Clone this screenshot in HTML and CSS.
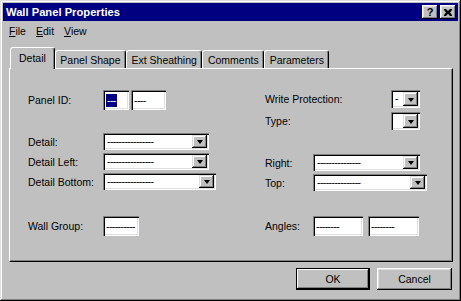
FILE: index.html
```html
<!DOCTYPE html>
<html lang="en">
<head>
	<meta charset="UTF-8">
	<title>Wall Panel Properties</title>
	<link rel="stylesheet" href="styles.css">
</head>
<body>
	<div class="window">
		<div class="titlebar">
			<span class="title">Wall Panel Properties</span>
			<div class="title-btns">
				<span class="tbtn help">?</span>
				<span class="tbtn">
					<svg width="8" height="7" viewBox="0 0 8 7"><path d="M0 0h2l2 2 2-2h2v1L6 3.5 8 6v1H6L4 5 2 7H0V6l2-2.5L0 1z" fill="#000"/></svg>
				</span>
			</div>
		</div>

		<div class="menubar">
			<span><u>F</u>ile</span>
			<span><u>E</u>dit</span>
			<span><u>V</u>iew</span>
		</div>

		<div class="tabs">
			<div class="tab active">Detail</div>
			<div class="tab">Panel Shape</div>
			<div class="tab">Ext Sheathing</div>
			<div class="tab">Comments</div>
			<div class="tab">Parameters</div>
		</div>

		<div class="panel">
			<div class="col col-left">
				<div class="row r-id">
					<span class="label">Panel ID:</span>
					<span class="field w-id1"><span class="sel">---</span></span>
					<span class="field w-id2">----</span>
				</div>
				<div class="row r-detail">
					<span class="label">Detail:</span>
					<span class="combo w-106"><span class="value">----------------</span><span class="arrow"></span></span>
				</div>
				<div class="row r-next">
					<span class="label">Detail Left:</span>
					<span class="combo w-106"><span class="value">----------------</span><span class="arrow"></span></span>
				</div>
				<div class="row r-next">
					<span class="label">Detail Bottom:</span>
					<span class="combo w-113"><span class="value">----------------</span><span class="arrow"></span></span>
				</div>
				<div class="row r-group">
					<span class="label">Wall Group:</span>
					<span class="field w-group">----------</span>
				</div>
			</div>

			<div class="col col-right">
				<div class="row r-wp">
					<span class="label wide">Write Protection:</span>
					<span class="combo small"><span class="value">-</span><span class="arrow"></span></span>
				</div>
				<div class="row r-type">
					<span class="label wide">Type:</span>
					<span class="combo small"><span class="value"></span><span class="arrow"></span></span>
				</div>
				<div class="row r-right">
					<span class="label narrow">Right:</span>
					<span class="combo w-107"><span class="value">---------------</span><span class="arrow"></span></span>
				</div>
				<div class="row r-next">
					<span class="label narrow">Top:</span>
					<span class="combo w-114"><span class="value">---------------</span><span class="arrow"></span></span>
				</div>
				<div class="row r-angles">
					<span class="label narrow">Angles:</span>
					<span class="field w-ang1">--------</span>
					<span class="field w-ang2">--------</span>
				</div>
			</div>
		</div>

		<div class="actions">
			<button class="btn default">OK</button>
			<button class="btn">Cancel</button>
		</div>
	</div>
</body>
</html>
```

FILE: styles.css
```css
body {
    margin: 0;
    background-color: #c0c0c0;
    font-family: "Liberation Sans", Arial, sans-serif;
    font-size: 10.5px;
    color: #000;
}

/* window frame */
.window {
    width: 461px;
    height: 301px;
    box-sizing: border-box;
    padding: 3px;
    background-color: #c0c0c0;
    box-shadow: inset -1px -1px #000, inset 1px 1px #dfdfdf,
                inset -2px -2px #808080, inset 2px 2px #fff;
    display: flex;
    flex-direction: column;
}

.titlebar {
    height: 18px;
    background-color: #000080;
    color: #fff;
    display: flex;
    align-items: center;
    justify-content: space-between;
    padding: 0 2px 0 3px;
}

.title {
    font-weight: bold;
    font-size: 11.2px;
}

.title-btns {
    display: flex;
    gap: 2px;
}

.tbtn {
    width: 16px;
    height: 14px;
    box-sizing: border-box;
    background-color: #c0c0c0;
    color: #000;
    box-shadow: inset -1px -1px #000, inset 1px 1px #fff,
                inset -2px -2px #808080, inset 2px 2px #dfdfdf;
    display: flex;
    align-items: center;
    justify-content: center;
}

.tbtn.help {
    font-weight: bold;
    font-size: 11px;
}

.menubar {
    height: 19px;
    display: flex;
    align-items: center;
    padding-left: 1px;
}

.menubar span {
    padding: 0 5px;
}

/* tabs */
.tabs {
    margin-top: 7px;
    height: 21px;
    display: flex;
    align-items: flex-end;
    padding-left: 7px;
}

.tab {
    height: 18px;
    box-sizing: border-box;
    padding: 0 4.5px;
    border: 1px solid;
    border-color: #fff #000 transparent #fff;
    border-bottom: none;
    border-radius: 3px 3px 0 0;
    box-shadow: inset -1px 0 #808080;
    display: flex;
    align-items: center;
}

.tab.active {
    height: 22px;
    margin-bottom: -1px;
    padding: 0 8px 2px;
    background-color: #c0c0c0;
    position: relative;
    z-index: 1;
}

.panel {
    height: 194px;
    box-sizing: border-box;
    margin: 0 5px 0 6px;
    border: 1px solid;
    border-color: #fff #000 #000 #fff;
    box-shadow: inset -1px -1px #808080;
    padding: 21px 0 0 18px;
    display: flex;
}

.col-left {
    width: 237px;
}

.row {
    display: flex;
    align-items: center;
}

.label {
    width: 75px;
    flex: none;
}

.label.wide {
    width: 126px;
}

.label.narrow {
    width: 48px;
}

.r-detail { margin-top: 23px; }
.r-next { margin-top: 3px; }
.r-group { margin-top: 26px; }
.r-type { margin-top: 4px; }
.r-right { margin-top: 24px; }
.r-angles { margin-top: 25px; }

/* sunken inputs */
.field, .combo {
    box-sizing: border-box;
    background-color: #fff;
    box-shadow: inset 1px 1px #808080, inset 2px 2px #000,
                inset -1px -1px #fff, inset -2px -2px #dfdfdf;
    letter-spacing: -0.6px;
    white-space: nowrap;
    overflow: hidden;
}

.field {
    height: 20px;
    padding: 0 3px;
    display: flex;
    align-items: center;
}

.field + .field {
    margin-left: 2px;
}

.w-id1 { width: 26px; }
.w-id2 { width: 35px; }
.w-group { width: 36px; }
.w-ang1 { width: 50px; }
.w-ang2 { width: 51px; margin-left: 5px !important; }

.sel {
    background-color: #000080;
    color: #fff;
    padding: 0 1px;
    line-height: 13px;
}

.combo {
    height: 17px;
    padding: 2px;
    display: flex;
}

.combo.small {
    width: 29px;
    height: 18px;
}

.w-106 { width: 106px; }
.w-113 { width: 113px; }
.w-107 { width: 107px; }
.w-114 { width: 114px; }

.combo .value {
    flex: 1;
    padding-left: 2px;
    line-height: 13px;
}

.combo .arrow {
    width: 15px;
    flex: none;
    background-color: #c0c0c0;
    box-shadow: inset -1px -1px #000, inset 1px 1px #dfdfdf,
                inset -2px -2px #808080, inset 2px 2px #fff;
    display: flex;
    align-items: center;
    justify-content: center;
}

.combo .arrow:after {
    content: "";
    border: 3.5px solid transparent;
    border-top: 4px solid #000;
    border-bottom: none;
    margin-top: 1px;
}

/* bottom buttons */
.actions {
    display: flex;
    justify-content: flex-end;
    gap: 7px;
    margin-top: 6px;
    padding-right: 6px;
}

.btn {
    width: 75px;
    height: 22px;
    padding: 0;
    border: none;
    background-color: #c0c0c0;
    font-family: "Liberation Sans", Arial, sans-serif;
    font-size: 10.5px;
    color: #000;
    box-shadow: inset -1px -1px #000, inset 1px 1px #fff,
                inset -2px -2px #808080, inset 2px 2px #dfdfdf;
}

.btn.default {
    width: 74px;
    box-shadow: inset 0 0 0 1px #000, inset -2px -2px #000, inset 2px 2px #fff,
                inset -3px -3px #808080;
}
```
